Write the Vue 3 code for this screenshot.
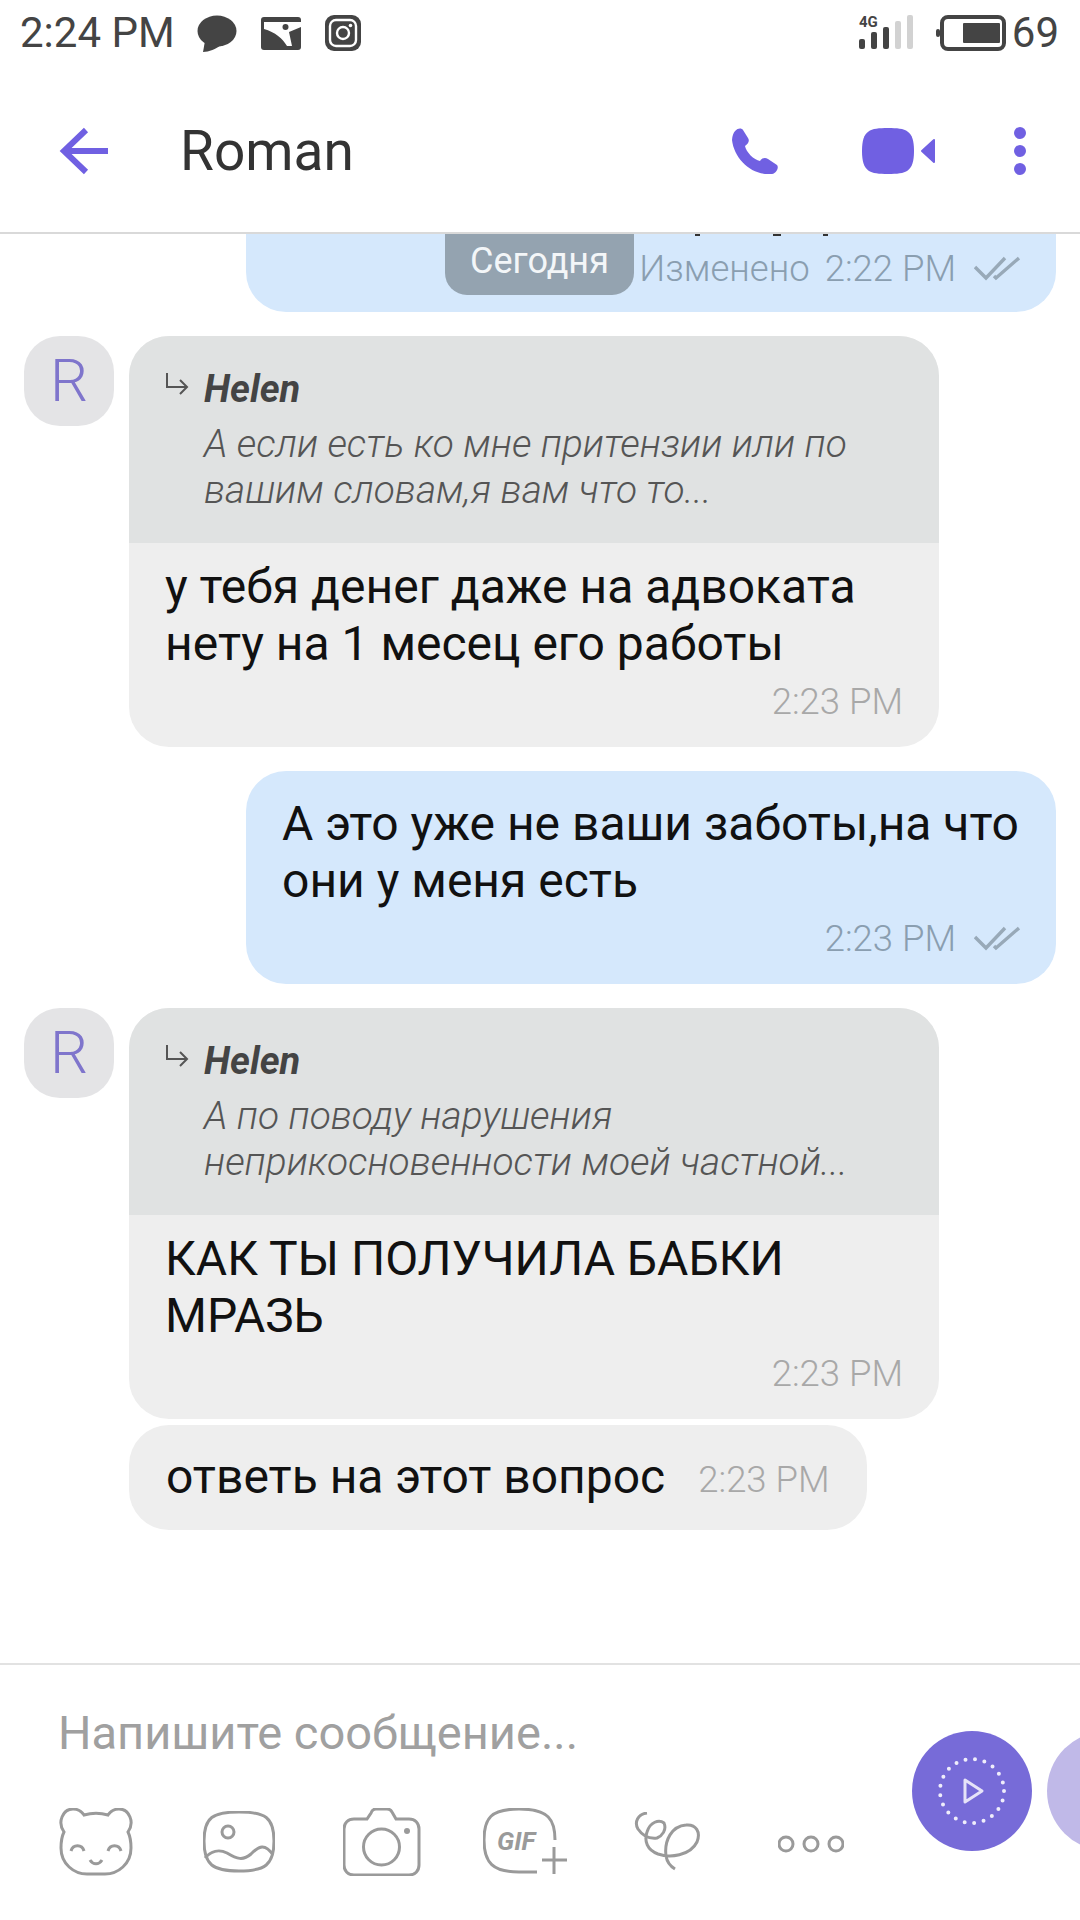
<script setup>
const thread = [
  {
    id: 1,
    from: 'them',
    replyTo: 'Helen',
    quote: ['А если есть ко мне притензии или по', 'вашим словам,я вам что то...'],
    lines: ['у тебя денег даже на адвоката', 'нету на 1 месец его работы'],
    time: '2:23 PM'
  },
  {
    id: 2,
    from: 'me',
    lines: ['А это уже не ваши заботы,на что', 'они у меня есть'],
    time: '2:23 PM'
  },
  {
    id: 3,
    from: 'them',
    replyTo: 'Helen',
    quote: ['А по поводу нарушения', 'неприкосновенности моей частной...'],
    lines: ['КАК ТЫ ПОЛУЧИЛА БАБКИ', 'МРАЗЬ'],
    time: '2:23 PM'
  }
]
</script>

<template>
  <div class="page">
    <div class="status-bar">
      <span class="clock">2:24 PM</span>
      <svg class="st-chat" width="40" height="37" viewBox="0 0 40 37">
        <ellipse cx="20" cy="16" rx="19.5" ry="15.5" fill="#444" />
        <path d="M8 26 L6 37 C12 37 19 34 24 30 Z" fill="#444" />
      </svg>
      <svg class="st-pic" width="40" height="33" viewBox="0 0 40 33">
        <rect width="40" height="33" rx="3" fill="#444" />
        <path d="M3 5 H40 V10 L28 15 L31 29 H26 C22 22 14 15 3 12 Z" fill="#fff" />
        <circle cx="24.5" cy="10" r="3" fill="#444" />
      </svg>
      <svg class="st-insta" width="36" height="36" viewBox="0 0 36 36">
        <rect width="36" height="36" rx="9" fill="#444" />
        <rect x="5" y="5" width="26" height="26" rx="6" fill="none" stroke="#fff" stroke-width="2.4" />
        <circle cx="18" cy="18" r="6" fill="none" stroke="#fff" stroke-width="2.4" />
        <circle cx="25.5" cy="10.5" r="1.8" fill="#fff" />
      </svg>
      <svg class="st-signal" width="56" height="36" viewBox="0 0 56 36">
        <text x="0" y="12" class="net">4G</text>
        <rect x="0" y="24" width="6" height="10" rx="2" fill="#444" />
        <rect x="12" y="17" width="6" height="17" rx="2" fill="#444" />
        <rect x="24" y="12" width="6" height="22" rx="2" fill="#444" />
        <rect x="36" y="6" width="6" height="28" rx="2" fill="#d2d2d2" />
        <rect x="48" y="0" width="6" height="34" rx="2" fill="#d2d2d2" />
      </svg>
      <svg class="st-battery" width="70" height="36" viewBox="0 0 70 36">
        <rect x="6" y="2" width="62" height="32" rx="6" fill="none" stroke="#444" stroke-width="4" />
        <rect x="0" y="14" width="4" height="8" rx="2" fill="#444" />
        <rect x="27" y="8" width="37" height="20" rx="1" fill="#444" />
      </svg>
      <span class="level">69</span>
    </div>

    <header class="top">
      <svg class="back" width="52" height="52" viewBox="0 0 52 52">
        <path d="M49 26 H5 M27 5 L5 26 L27 47" fill="none" stroke="#7060e2" stroke-width="6" />
      </svg>
      <span class="name">Roman</span>
      <svg class="call" width="47" height="47" viewBox="0 0 47 47">
        <path d="M0 12 C2 30 18 46 36 46 H40 C45 45 47 39 45 37 L36 31 C33 29 30 30 28 33 C22 32 14 24 13 18 C16 16 18 13 16 10 L11 2 C9 -1 1 0 0 12 Z" fill="#7060e2" />
      </svg>
      <svg class="video" width="74" height="46" viewBox="0 0 74 46">
        <path d="M26 0 C44 0 52 2 52 23 C52 44 44 46 26 46 C8 46 0 44 0 23 C0 2 8 0 26 0 Z" fill="#7060e2" />
        <path d="M60 23 L72 12 V34 Z" fill="#7060e2" stroke="#7060e2" stroke-width="2" stroke-linejoin="round" />
      </svg>
      <svg class="more" width="12" height="48" viewBox="0 0 12 48">
        <circle cx="6" cy="6" r="6" fill="#7060e2" />
        <circle cx="6" cy="24" r="6" fill="#7060e2" />
        <circle cx="6" cy="42" r="6" fill="#7060e2" />
      </svg>
    </header>

    <main class="chat">
      <div class="date-pill">Сегодня</div>

      <div class="row mine">
        <div class="bubble blue cut">
          <i class="speck s1"></i><i class="speck s2"></i><i class="speck s3"></i>
          <div class="meta">
            <span>Изменено</span>
            <span class="gap-time">2:22 PM</span>
            <svg class="ticks" width="46" height="26" viewBox="0 0 46 26">
              <path d="M1 12 L12 23 L31 3 M20 21 L22 23 L45 3" fill="none" stroke="#98a9b8" stroke-width="3.4" />
            </svg>
          </div>
        </div>
      </div>

      <div v-for="m in thread" :key="m.id" class="row" :class="m.from === 'me' ? 'mine' : 'theirs'">
        <div v-if="m.from === 'them'" class="avatar">R</div>
        <div class="bubble" :class="m.from === 'me' ? 'blue' : 'grey'">
          <div v-if="m.quote" class="quote">
            <div class="quote-head">
              <svg width="24" height="24" viewBox="0 0 24 24">
                <path d="M2 1 V15 H22 M15 8 L22 15 L15 22" fill="none" stroke="#555" stroke-width="2" />
              </svg>
              <b>{{ m.replyTo }}</b>
            </div>
            <div v-for="q in m.quote" :key="q" class="quote-line">{{ q }}</div>
          </div>
          <div class="body" :class="{ 'no-quote': !m.quote }">
            <div v-for="l in m.lines" :key="l" class="text">{{ l }}</div>
            <div class="meta">
              <span>{{ m.time }}</span>
              <svg v-if="m.from === 'me'" class="ticks" width="46" height="26" viewBox="0 0 46 26">
                <path d="M1 12 L12 23 L31 3 M20 21 L22 23 L45 3" fill="none" stroke="#98a9b8" stroke-width="3.4" />
              </svg>
            </div>
          </div>
        </div>
      </div>

      <div class="row theirs tight">
        <div class="avatar blank"></div>
        <div class="bubble grey inline">
          <span class="text">ответь на этот вопрос</span>
          <span class="meta">2:23 PM</span>
        </div>
      </div>
    </main>

    <footer class="composer">
      <div class="composer-left">
        <div class="placeholder">Напишите сообщение...</div>
        <div class="tools">
          <div class="tool">
            <svg width="76" height="68" viewBox="0 0 76 68">
              <path d="M6 24 C-1 14 5 1 15 1 C20 1 24 4 26 7 C33 5 43 5 50 7 C52 4 56 1 61 1 C71 1 77 14 70 24 C72 28 73 32 73 40 C73 56 60 66 47 66 H29 C16 66 3 56 3 40 C3 32 4 28 6 24 Z M13 43 C15 36 24 36 26 43 M50 43 C52 36 61 36 63 43 M32 52 C35 57 41 57 44 52" class="ln" />
            </svg>
          </div>
          <div class="tool">
            <svg width="72" height="62" viewBox="0 0 72 62">
              <path d="M36 1 C62 1 71 6 71 30 C71 54 62 60 36 60 C10 60 1 54 1 30 C1 6 10 1 36 1 Z M2 47 C8 40 16 38 24 42 C34 48 40 50 48 43 C56 35 62 32 70 44" class="ln" />
              <circle cx="25" cy="21" r="6" class="ln" />
            </svg>
          </div>
          <div class="tool">
            <svg width="78" height="68" viewBox="0 0 78 68">
              <path d="M11 11 H24 L28 5 C29 2 31 1 33 1 H44 C47 1 48 2 49 4 L53 11 H66 C72 11 76 15 76 21 V57 C76 63 72 67 66 67 H11 C5 67 1 63 1 57 V21 C1 15 5 11 11 11 Z" class="ln" />
              <circle cx="38.5" cy="39" r="18" class="ln" />
              <circle cx="64" cy="23" r="3" fill="#9a9a9a" />
            </svg>
          </div>
          <div class="tool">
            <svg width="84" height="68" viewBox="0 0 84 68">
              <path d="M72 32 C72 12 66 1 36 1 C8 1 1 10 1 32 C1 55 10 64 36 64 H54 M71 39 V66 M59 52 H84" class="ln" />
              <text x="14" y="42" class="gif">GIF</text>
            </svg>
          </div>
          <div class="tool">
            <svg width="68" height="60" viewBox="0 0 68 60">
              <path d="M13 1 C4 2 0 10 4 17 C8 23 14 27 23 26 C28 24 33 18 30 11 C25 7 16 10 13 20 C10 29 13 38 24 42 C36 46 56 44 63 30 C67 20 62 12 52 13 C38 14 30 28 32 44 C33 50 36 54 41 57" class="ln" />
            </svg>
          </div>
          <div class="tool tool-dots">
            <svg width="66" height="18" viewBox="0 0 66 18">
              <circle cx="8" cy="9" r="7" class="ln" />
              <circle cx="33" cy="9" r="7" class="ln" />
              <circle cx="58" cy="9" r="7" class="ln" />
            </svg>
          </div>
        </div>
      </div>
      <div class="fabs">
        <div class="fab">
          <svg width="72" height="72" viewBox="0 0 72 72">
            <circle cx="36" cy="36" r="32" fill="none" stroke="#efedfb" stroke-width="4" stroke-linecap="round" stroke-dasharray="0 9.6" />
            <path d="M29 25 V47 L46 36 Z" fill="none" stroke="#e6e3f8" stroke-width="3" stroke-linejoin="round" />
          </svg>
        </div>
        <div class="fab pale"></div>
      </div>
    </footer>
  </div>
</template>

<style>
html, body {
  margin: 0;
  background: #fff;
}
</style>

<style scoped>
.page {
  width: 1080px;
  height: 1920px;
  display: flex;
  flex-direction: column;
  overflow: hidden;
  background: #fff;
  font-family: Roboto, "Liberation Sans", sans-serif;
}

/* status bar */
.status-bar {
  height: 66px;
  flex: none;
  display: flex;
  align-items: center;
  padding: 0 21px 0 20px;
  box-sizing: border-box;
  color: #444;
}
.clock {
  font-size: 42px;
  line-height: 66px;
  margin-right: 22px;
}
.st-pic { margin-left: 24px; }
.st-insta { margin-left: 24px; }
.st-signal {
  margin-left: auto;
  overflow: visible;
}
.st-battery { margin-left: 21px; }
.level {
  font-size: 42px;
  margin-left: 6px;
  line-height: 66px;
}
.net {
  font-family: Roboto, sans-serif;
  font-size: 15px;
  font-weight: 700;
  fill: #444;
}

/* header */
.top {
  height: 168px;
  flex: none;
  box-sizing: border-box;
  display: flex;
  align-items: center;
  padding: 4px 54px 0 59px;
  border-bottom: 2px solid #d9d9d9;
}
.name {
  font-size: 55px;
  color: #333;
  margin-left: 69px;
}
.call { margin-left: auto; }
.video { margin-left: 83px; }
.more { margin-left: 78px; }

/* chat */
.chat {
  position: relative;
  flex: 1;
  min-height: 0;
  overflow: hidden;
  display: flex;
  flex-direction: column;
  gap: 24px;
  padding: 0 24px;
}
.date-pill {
  position: absolute;
  z-index: 2;
  top: 0;
  left: 445px;
  width: 189px;
  height: 61px;
  line-height: 54px;
  text-align: center;
  font-size: 36px;
  color: #f3f6f8;
  background: #94a3b0;
  border-radius: 0 0 22px 22px;
}
.row {
  display: flex;
  gap: 15px;
}
.row.mine { justify-content: flex-end; }
.row.tight { margin-top: -18px; }
.avatar {
  width: 90px;
  height: 90px;
  flex: none;
  border-radius: 36px;
  background: #e4e4e6;
  color: #7f75cc;
  font-size: 60px;
  font-weight: 300;
  line-height: 90px;
  text-align: center;
}
.avatar.blank { background: none; }
.bubble {
  position: relative;
  width: 810px;
  border-radius: 40px;
  overflow: hidden;
  box-sizing: border-box;
}
.bubble.blue { background: #d5e8fc; }
.bubble.grey { background: #eee; }
.bubble.cut {
  height: 78px;
  border-radius: 0 0 40px 40px;
  padding: 5px 36px 0 0;
}
.speck {
  position: absolute;
  top: 0;
  height: 2px;
  width: 5px;
  background: #333;
}
.s1 { left: 449px; }
.s2 { left: 527px; width: 8px; }
.s3 { left: 577px; }
.quote {
  height: 207px;
  box-sizing: border-box;
  background: #e0e2e2;
  padding: 31px 36px 0 36px;
}
.quote-head {
  display: flex;
  align-items: center;
  height: 44px;
}
.quote-head svg { margin: -10px 15px 0 0; }
.quote-head b {
  font-size: 38px;
  font-style: italic;
  font-weight: 700;
  color: #444;
}
.quote-line {
  font-size: 38.8px;
  font-style: italic;
  font-weight: 300;
  line-height: 46px;
  color: #555;
  margin-left: 39px;
}
.quote-head + .quote-line { margin-top: 10px; }
.body { padding: 16px 36px 24px; }
.body.no-quote { padding-top: 25px; }
.text {
  font-size: 48px;
  line-height: 56.5px;
  color: #111;
}
.meta {
  display: flex;
  justify-content: flex-end;
  align-items: center;
  height: 44px;
  margin-top: 7px;
  font-size: 36.5px;
  font-weight: 300;
  color: #a8a8a8;
}
.blue .meta { color: #8a9eb0; }
.gap-time { margin-left: 15px; }
.ticks { margin-left: 18px; }
.bubble.inline {
  width: auto;
  height: 105px;
  display: flex;
  align-items: center;
  gap: 33px;
  padding: 0 37px;
}
.inline .meta { margin-top: 4px; }

/* composer */
.composer {
  height: 257px;
  flex: none;
  box-sizing: border-box;
  display: flex;
  border-top: 2px solid #e2e2e2;
}
.composer-left {
  width: 912px;
  flex: none;
}
.placeholder {
  margin: 38px 0 0 58px;
  font-size: 47px;
  line-height: 60px;
  color: #a0a0a0;
}
.tools {
  display: flex;
  height: 72px;
  margin: 43px 0 0 24px;
}
.tool {
  width: 143px;
  display: flex;
  align-items: center;
  justify-content: center;
}
.tool-dots { padding-top: 4px; box-sizing: border-box; }
.ln {
  fill: none;
  stroke: #9a9a9a;
  stroke-width: 3;
}
.gif {
  font-family: Roboto, sans-serif;
  font-size: 26px;
  font-weight: 700;
  font-style: italic;
  fill: #9a9a9a;
}
.fabs {
  display: flex;
  gap: 15px;
  flex: none;
  margin-top: 66px;
}
.fab {
  width: 120px;
  height: 120px;
  flex: none;
  border-radius: 50%;
  background: #776bd8;
  display: flex;
  align-items: center;
  justify-content: center;
}
.fab.pale { background: #c0b9e8; }
</style>
